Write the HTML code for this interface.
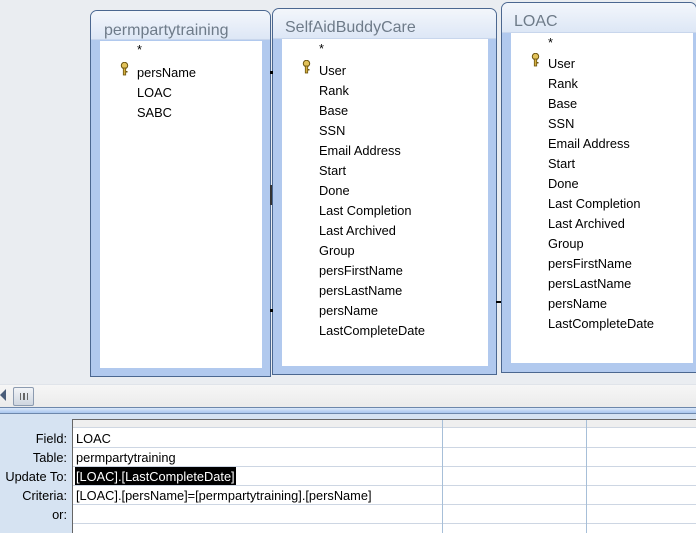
<!DOCTYPE html>
<html><head><style>
*{margin:0;padding:0;box-sizing:border-box}
body{width:696px;height:533px;position:relative;overflow:hidden;background:#eaedf1;font-family:"Liberation Sans",sans-serif;font-size:12.8px;color:#000}
.t{position:absolute;border:1px solid #4b6790;border-radius:7px 7px 0 0;background:#b1c9ee}
.t .hd{position:absolute;left:0;right:0;top:0;height:30px;background:linear-gradient(#f3f6fb,#dde7f6);border-radius:6px 6px 0 0;border-bottom:1px solid #c8d6ec}
.t .ti{position:absolute;left:12px;top:10px;font-size:16px;color:#6e7b89}
.t .bd{position:absolute;background:#fff}
.it{position:absolute;white-space:nowrap}
.key{position:absolute;width:9px;height:14px}
</style></head><body>

<div class="t" style="left:90px;top:10px;width:181px;height:367px">
 <div class="hd" style="height:29px"></div>
 <div class="ti" style="left:13px;top:11px">permpartytraining</div>
 <div class="bd" style="left:9px;top:30px;width:162px;height:327px"></div>
</div>
<div class="it" style="left:137px;top:42px">*</div>
<svg class="key" style="left:120px;top:62px" viewBox="0 0 9 14"><circle cx="4.5" cy="3.5" r="3.2" fill="#e2c25a" stroke="#6b5410"/><rect x="3.3" y="6" width="2.4" height="7" fill="#d5b040" stroke="#6b5410" stroke-width=".8"/><rect x="5.5" y="9" width="2" height="1.5" fill="#6b5410"/></svg>
<div class="it" style="left:137px;top:65px">persName</div>
<div class="it" style="left:137px;top:85px">LOAC</div>
<div class="it" style="left:137px;top:105px">SABC</div>

<div class="t" style="left:272px;top:8px;width:225px;height:367px">
 <div class="hd"></div>
 <div class="ti">SelfAidBuddyCare</div>
 <div class="bd" style="left:9px;top:30px;width:206px;height:327px"></div>
</div>
<div class="it" style="left:319px;top:41px">*</div>
<svg class="key" style="left:302px;top:60px" viewBox="0 0 9 14"><circle cx="4.5" cy="3.5" r="3.2" fill="#e2c25a" stroke="#6b5410"/><rect x="3.3" y="6" width="2.4" height="7" fill="#d5b040" stroke="#6b5410" stroke-width=".8"/><rect x="5.5" y="9" width="2" height="1.5" fill="#6b5410"/></svg>
<div class="it" style="left:319px;top:63px">User</div>
<div class="it" style="left:319px;top:83px">Rank</div>
<div class="it" style="left:319px;top:103px">Base</div>
<div class="it" style="left:319px;top:123px">SSN</div>
<div class="it" style="left:319px;top:143px">Email Address</div>
<div class="it" style="left:319px;top:163px">Start</div>
<div class="it" style="left:319px;top:183px">Done</div>
<div class="it" style="left:319px;top:203px">Last Completion</div>
<div class="it" style="left:319px;top:223px">Last Archived</div>
<div class="it" style="left:319px;top:243px">Group</div>
<div class="it" style="left:319px;top:263px">persFirstName</div>
<div class="it" style="left:319px;top:283px">persLastName</div>
<div class="it" style="left:319px;top:303px">persName</div>
<div class="it" style="left:319px;top:323px">LastCompleteDate</div>

<div class="t" style="left:501px;top:2px;width:196px;height:371px">
 <div class="hd"></div>
 <div class="ti">LOAC</div>
 <div class="bd" style="left:9px;top:30px;width:182px;height:330px"></div>
</div>
<div class="it" style="left:548px;top:35px">*</div>
<svg class="key" style="left:531px;top:53px" viewBox="0 0 9 14"><circle cx="4.5" cy="3.5" r="3.2" fill="#e2c25a" stroke="#6b5410"/><rect x="3.3" y="6" width="2.4" height="7" fill="#d5b040" stroke="#6b5410" stroke-width=".8"/><rect x="5.5" y="9" width="2" height="1.5" fill="#6b5410"/></svg>
<div class="it" style="left:548px;top:56px">User</div>
<div class="it" style="left:548px;top:76px">Rank</div>
<div class="it" style="left:548px;top:96px">Base</div>
<div class="it" style="left:548px;top:116px">SSN</div>
<div class="it" style="left:548px;top:136px">Email Address</div>
<div class="it" style="left:548px;top:156px">Start</div>
<div class="it" style="left:548px;top:176px">Done</div>
<div class="it" style="left:548px;top:196px">Last Completion</div>
<div class="it" style="left:548px;top:216px">Last Archived</div>
<div class="it" style="left:548px;top:236px">Group</div>
<div class="it" style="left:548px;top:256px">persFirstName</div>
<div class="it" style="left:548px;top:276px">persLastName</div>
<div class="it" style="left:548px;top:296px">persName</div>
<div class="it" style="left:548px;top:316px">LastCompleteDate</div>

<div style="position:absolute;left:270px;top:71px;width:3px;height:3px;background:#000"></div>
<div style="position:absolute;left:270px;top:309px;width:3px;height:3px;background:#000"></div>
<div style="position:absolute;left:496px;top:301px;width:5px;height:2px;background:#000"></div>
<div style="position:absolute;left:270px;top:185px;width:2px;height:20px;background:#333"></div>

<div style="position:absolute;left:0;top:384px;width:696px;height:23px;background:linear-gradient(#f6f6f6,#ebebeb);border-top:1px solid #e0e4ea"></div>
<svg style="position:absolute;left:0;top:389px" width="6" height="12"><polygon points="6,0 6,12 0,6" fill="#4a5d7a"/></svg>
<div style="position:absolute;left:13px;top:387px;width:21px;height:19px;border:1px solid #8c9bb0;border-radius:2px;background:linear-gradient(#f2f4f7,#cfd6e0)"></div>
<div style="position:absolute;left:20px;top:393px;width:8px;height:7px;border-left:1px solid #666;border-right:1px solid #666"></div>
<div style="position:absolute;left:23px;top:393px;width:2px;height:7px;border-left:1px solid #666;border-right:1px solid #666"></div>

<div style="position:absolute;left:0;top:407px;width:696px;height:7px;background:linear-gradient(#dbe8fa,#a9c6ee);border-top:1px solid #6d87ab;border-bottom:1px solid #6d87ab"></div>

<div style="position:absolute;left:0;top:414px;width:696px;height:119px;background:#d6e3f2"></div>
<div style="position:absolute;left:72px;top:419px;width:624px;height:114px;background:#fff;border-left:1px solid #666;border-top:1px solid #666"></div>
<div style="position:absolute;left:73px;top:420px;width:623px;height:8px;background:#efefef;border-bottom:1px solid #cfd7e2"></div>
<div style="position:absolute;left:73px;top:447px;width:623px;height:1px;background:#cdd6e3"></div>
<div style="position:absolute;left:73px;top:466px;width:623px;height:1px;background:#cdd6e3"></div>
<div style="position:absolute;left:73px;top:485px;width:623px;height:1px;background:#cdd6e3"></div>
<div style="position:absolute;left:73px;top:504px;width:623px;height:1px;background:#cdd6e3"></div>
<div style="position:absolute;left:73px;top:523px;width:623px;height:1px;background:#cdd6e3"></div>
<div style="position:absolute;left:442px;top:420px;width:1px;height:113px;background:#a7bfd8"></div>
<div style="position:absolute;left:586px;top:420px;width:1px;height:113px;background:#a7bfd8"></div>

<div class="it" style="left:0;width:67px;text-align:right;top:431px">Field:</div>
<div class="it" style="left:0;width:67px;text-align:right;top:450px">Table:</div>
<div class="it" style="left:0;width:67px;text-align:right;top:469px">Update To:</div>
<div class="it" style="left:0;width:67px;text-align:right;top:488px">Criteria:</div>
<div class="it" style="left:0;width:67px;text-align:right;top:507px">or:</div>

<div class="it" style="left:76px;top:431px">LOAC</div>
<div class="it" style="left:76px;top:450px">permpartytraining</div>
<div class="it" style="left:76px;top:467px;background:#000;color:#fff;padding:2px 1px 1px 1px;margin-left:-1px">[LOAC].[LastCompleteDate]</div>
<div class="it" style="left:76px;top:488px">[LOAC].[persName]=[permpartytraining].[persName]</div>
</body></html>
